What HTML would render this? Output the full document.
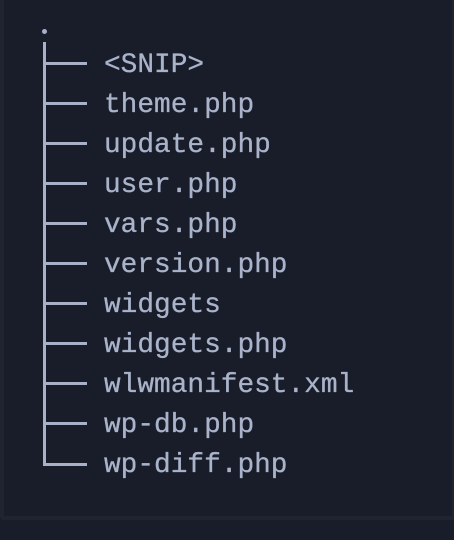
<!DOCTYPE html>
<html><head><style>
html,body{margin:0;padding:0;width:454px;height:540px;background:#191d2a;overflow:hidden}
.panel{position:absolute;left:0;top:-5px;width:448px;height:521px;border:4px solid #1f2430;border-top:none;border-radius:0 0 4px 4px;background:#191d2a}
.l{position:absolute;background:#a7b1c8}
.t{position:absolute;left:104px;font:27.8px "Liberation Mono",monospace;color:#a9b3ca;line-height:40px;white-space:pre;-webkit-text-stroke:0.3px #a9b3ca}
</style></head><body>
<div class="panel"></div>
<div class="l" style="left:42px;top:29px;width:5px;height:5px;border-radius:50%"></div>
<div class="l" style="left:43px;top:42px;width:3px;height:424px"></div>
<div class="l" style="left:43px;top:62px;width:44px;height:3px"></div>
<div class="l" style="left:43px;top:102px;width:44px;height:3px"></div>
<div class="l" style="left:43px;top:142px;width:44px;height:3px"></div>
<div class="l" style="left:43px;top:182px;width:44px;height:3px"></div>
<div class="l" style="left:43px;top:222px;width:44px;height:3px"></div>
<div class="l" style="left:43px;top:262px;width:44px;height:3px"></div>
<div class="l" style="left:43px;top:302px;width:44px;height:3px"></div>
<div class="l" style="left:43px;top:342px;width:44px;height:3px"></div>
<div class="l" style="left:43px;top:382px;width:44px;height:3px"></div>
<div class="l" style="left:43px;top:422px;width:44px;height:3px"></div>
<div class="l" style="left:43px;top:463px;width:44px;height:3px"></div>
<div class="t" style="top:46px">&lt;SNIP&gt;
theme.php
update.php
user.php
vars.php
version.php
widgets
widgets.php
wlwmanifest.xml
wp-db.php
wp-diff.php</div>
</body></html>
